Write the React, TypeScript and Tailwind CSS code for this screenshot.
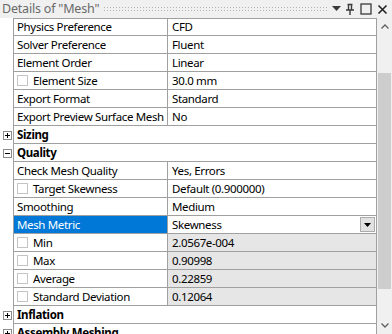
import React from "react";

type Row =
  | { kind: "prop"; label: string; value: string; check?: boolean; gray?: boolean; selected?: boolean; dropdown?: boolean }
  | { kind: "section"; label: string; open: boolean };

const rows: Row[] = [
  { kind: "prop", label: "Physics Preference", value: "CFD" },
  { kind: "prop", label: "Solver Preference", value: "Fluent" },
  { kind: "prop", label: "Element Order", value: "Linear" },
  { kind: "prop", label: "Element Size", value: "30.0 mm", check: true },
  { kind: "prop", label: "Export Format", value: "Standard" },
  { kind: "prop", label: "Export Preview Surface Mesh", value: "No" },
  { kind: "section", label: "Sizing", open: false },
  { kind: "section", label: "Quality", open: true },
  { kind: "prop", label: "Check Mesh Quality", value: "Yes, Errors" },
  { kind: "prop", label: "Target Skewness", value: "Default (0.900000)", check: true },
  { kind: "prop", label: "Smoothing", value: "Medium" },
  { kind: "prop", label: "Mesh Metric", value: "Skewness", selected: true, dropdown: true },
  { kind: "prop", label: "Min", value: "2.0567e-004", check: true, gray: true },
  { kind: "prop", label: "Max", value: "0.90998", check: true, gray: true },
  { kind: "prop", label: "Average", value: "0.22859", check: true, gray: true },
  { kind: "prop", label: "Standard Deviation", value: "0.12064", check: true, gray: true },
  { kind: "section", label: "Inflation", open: false },
  { kind: "section", label: "Assembly Meshing", open: false },
];

function Expander({ open }: { open: boolean }) {
  return (
    <div className="w-[9px] h-[9px] border border-[#8c8c8c] bg-white flex items-center justify-center relative">
      <div className="absolute w-[5px] h-px bg-black" />
      {!open && <div className="absolute w-px h-[5px] bg-black" />}
    </div>
  );
}

function Check() {
  return <div className="w-[11px] h-[11px] border border-[#c4c4c4] bg-white shrink-0" />;
}

export default function App() {
  return (
    <div
      className="w-[392px] h-[334px] overflow-hidden bg-white flex flex-col text-[11.5px] leading-none text-black tracking-[-0.35px]"
      style={{ fontFamily: '"Noto Sans", "Open Sans", sans-serif' }}
    >
      <div className="h-[18px] shrink-0 bg-[#f0f0f0] flex items-center pl-[2px] pr-[2px]">
        <span className="text-[#6a6a6a] text-[12.5px] tracking-[-0.2px] whitespace-nowrap shrink-0">Details of "Mesh"</span>
        <div className="flex-1 min-w-0 ml-[4px] h-[7px] bg-[radial-gradient(#b4b4b4_0.8px,transparent_1px)] bg-[length:3px_3px]" />
        <div className="flex items-center shrink-0 ml-[2px]">
          <div className="w-[12px] flex justify-center">
            <svg width="9" height="6" viewBox="0 0 9 6">
              <path d="M0 0h9L4.5 5z" fill="#3a3a3a" />
            </svg>
          </div>
          <div className="w-[16px] flex justify-center">
            <svg width="10" height="12" viewBox="0 0 10 12">
              <path d="M2.5 1.5h5M3.5 1.5v5M6.5 1.5v5M1 7h8M5 7v5" stroke="#3a3a3a" strokeWidth="1.4" fill="none" />
            </svg>
          </div>
          <div className="w-[16px] flex justify-center">
            <svg width="12" height="12" viewBox="0 0 12 12">
              <rect x="1" y="1" width="10" height="10" stroke="#3a3a3a" strokeWidth="1.3" fill="none" />
            </svg>
          </div>
          <div className="w-[16px] flex justify-center">
            <svg width="11" height="11" viewBox="0 0 11 11">
              <path d="M1.5 1.5L9.5 9.5M9.5 1.5L1.5 9.5" stroke="#222" strokeWidth="1.6" fill="none" />
            </svg>
          </div>
        </div>
      </div>
      <div className="flex flex-1 min-h-0">
        <div className="w-[377px] shrink-0 flex flex-col">
          {rows.map((r, i) => (
            <div key={i} className="flex h-[18px] shrink-0">
              <div className="w-[13px] shrink-0 flex items-center justify-start pl-[3px]">
                {r.kind === "section" && <Expander open={r.open} />}
              </div>
              <div
                className={`flex flex-1 border-l border-r border-b border-[#a0a0a0] ${i === 0 ? "border-t" : ""}`}
              >
                {r.kind === "section" ? (
                  <div className="flex items-center pl-[3px] font-bold whitespace-nowrap">{r.label}</div>
                ) : (
                  <>
                    <div
                      className={`w-[154px] shrink-0 border-r border-[#a0a0a0] flex items-center gap-[5px] pl-[3px] whitespace-nowrap overflow-hidden ${
                        r.selected ? "bg-[#0078d7] text-white" : ""
                      }`}
                    >
                      {r.check && <Check />}
                      <span>{r.label}</span>
                    </div>
                    <div
                      className={`flex-1 flex items-center pl-[4px] whitespace-nowrap ${r.gray ? "bg-[#e6e6e6]" : ""}`}
                    >
                      <span className="flex-1">{r.value}</span>
                      {r.dropdown && (
                        <div className="w-[15px] h-[15px] mr-px border border-[#adadad] bg-[#e1e1e1] flex items-center justify-center">
                          <svg width="7" height="4" viewBox="0 0 7 4">
                            <path d="M0 0h7L3.5 4z" fill="#000" />
                          </svg>
                        </div>
                      )}
                    </div>
                  </>
                )}
              </div>
            </div>
          ))}
        </div>
        <div className="flex-1 bg-[#f0f0f0] flex flex-col items-center">
          <div className="h-[17px] flex items-center justify-center">
            <svg width="8" height="5" viewBox="0 0 8 5">
              <path d="M0.5 4.5L4 1L7.5 4.5" stroke="#606060" strokeWidth="1.3" fill="none" />
            </svg>
          </div>
          <div className="mt-[38px] w-[13px] h-[216px] bg-[#cdcdcd]" />
          <div className="flex-1" />
          <div className="h-[17px] flex items-center justify-center">
            <svg width="8" height="5" viewBox="0 0 8 5">
              <path d="M0.5 0.5L4 4L7.5 0.5" stroke="#606060" strokeWidth="1.3" fill="none" />
            </svg>
          </div>
        </div>
      </div>
    </div>
  );
}
